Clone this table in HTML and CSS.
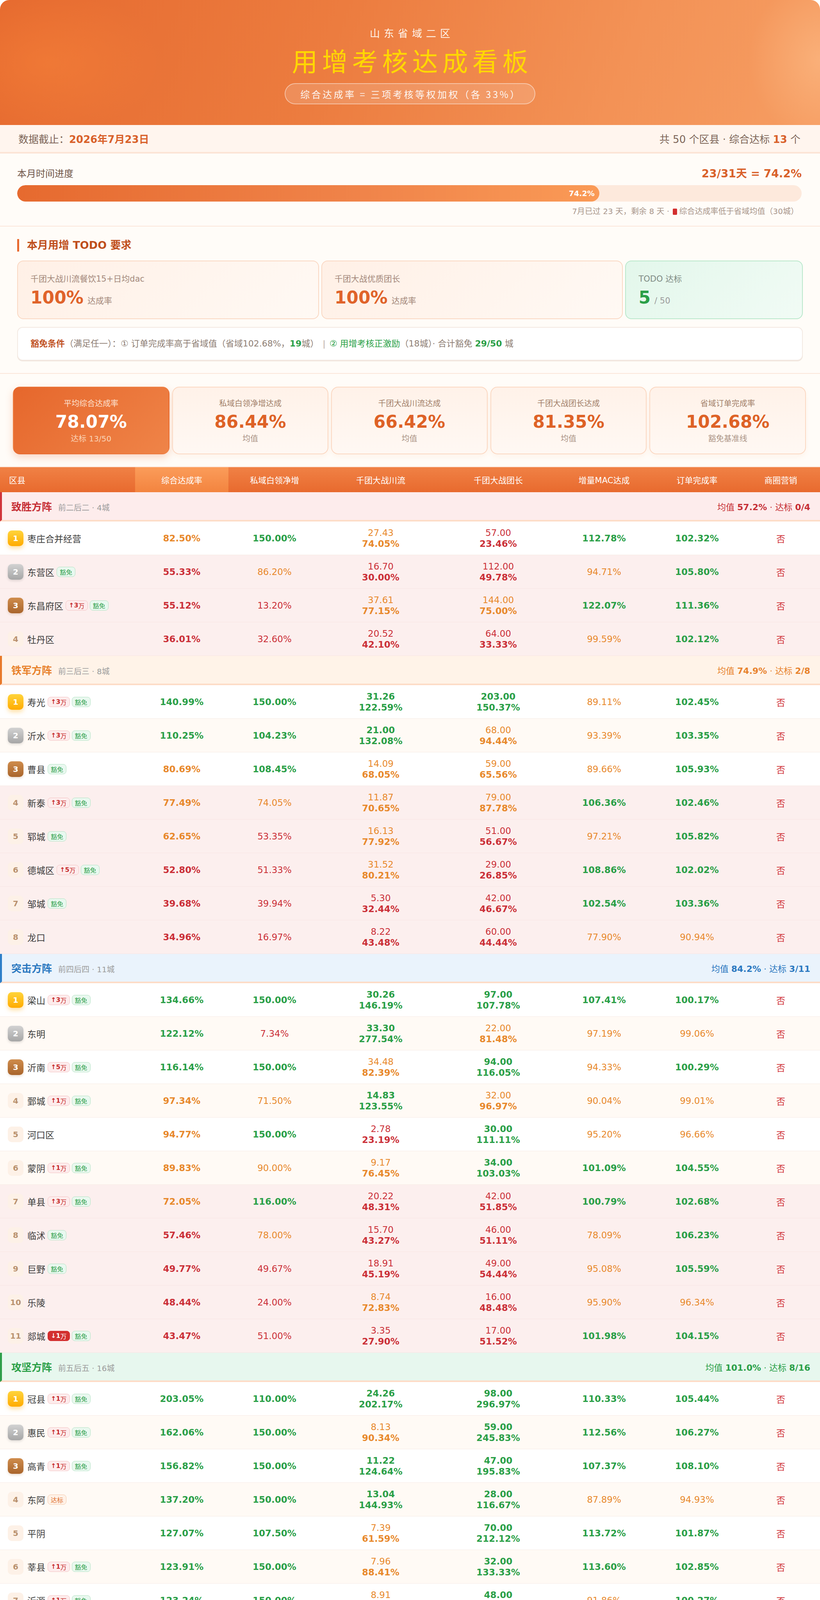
FILE: index.html
```html
<!DOCTYPE html>
<html lang="zh-CN">
<head>
<meta charset="utf-8">
<title>用增考核达成看板</title>
<link rel="stylesheet" href="styles.css">
</head>
<body>
<div class="page">
  <header class="hero">
    <div class="hero-sub">山东省域二区</div>
    <h1 class="hero-title">用增考核达成看板</h1>
    <div class="hero-pill">综合达成率 = 三项考核等权加权（各 33%）</div>
  </header>

  <div class="info">
    <div>数据截止：<b>2026年7月23日</b></div>
    <div>共 50 个区县 · 综合达标 <b>13</b> 个</div>
  </div>

  <section class="progress">
    <div class="progress-head">
      <span class="progress-label">本月时间进度</span>
      <span class="progress-value">23/31天 = 74.2%</span>
    </div>
    <div class="bar"><div class="bar-fill" style="width:74.2%"><span>74.2%</span></div></div>
    <div class="progress-note">7月已过 23 天，剩余 8 天 · <i class="swatch"></i>综合达成率低于省域均值（30城）</div>
  </section>

  <section class="todo">
    <h2 class="sec-title">本月用增 TODO 要求</h2>
    <div class="todo-grid">
      <div class="todo-card">
        <div class="todo-label">千团大战川流餐饮15+日均dac</div>
        <div class="todo-val"><b>100%</b><span>达成率</span></div>
      </div>
      <div class="todo-card">
        <div class="todo-label">千团大战优质团长</div>
        <div class="todo-val"><b>100%</b><span>达成率</span></div>
      </div>
      <div class="todo-card green">
        <div class="todo-label">TODO 达标</div>
        <div class="todo-val"><b>5</b><span>/ 50</span></div>
      </div>
    </div>
    <div class="exempt">
      <p class="ex-text"><b class="ex-title">豁免条件</b>（满足任一）：① 订单完成率高于省域值（省域102.68%，<b class="ex-num">19</b>城）<span class="ex-sep">|</span><span class="ex-green">② 用增考核正激励</span>（18城）· 合计豁免 <b class="ex-num">29/50</b> 城</p>
    </div>
  </section>

  <section class="kpis">
    <div class="kpi main">
      <div class="kpi-label">平均综合达成率</div>
      <div class="kpi-val">78.07%</div>
      <div class="kpi-sub">达标 13/50</div>
    </div>
    <div class="kpi">
      <div class="kpi-label">私域白领净增达成</div>
      <div class="kpi-val">86.44%</div>
      <div class="kpi-sub">均值</div>
    </div>
    <div class="kpi">
      <div class="kpi-label">千团大战川流达成</div>
      <div class="kpi-val">66.42%</div>
      <div class="kpi-sub">均值</div>
    </div>
    <div class="kpi">
      <div class="kpi-label">千团大战团长达成</div>
      <div class="kpi-val">81.35%</div>
      <div class="kpi-sub">均值</div>
    </div>
    <div class="kpi">
      <div class="kpi-label">省域订单完成率</div>
      <div class="kpi-val">102.68%</div>
      <div class="kpi-sub">豁免基准线</div>
    </div>
  </section>

  <div class="table">
    <div class="thead">
      <div class="th-name">区县</div>
      <div class="th-hl">综合达成率</div>
      <div>私域白领净增</div>
      <div>千团大战川流</div>
      <div>千团大战团长</div>
      <div>增量MAC达成</div>
      <div>订单完成率</div>
      <div>商圈营销</div>
    </div>

    <!-- 致胜方阵 -->
    <div class="grp g-red"><div><span class="gt">致胜方阵</span><span class="gs">前二后二 · 4城</span></div><div class="ga">均值 <b>57.2%</b> · 达标 <b>0/4</b></div></div>
    <div class="row"><div class="nm"><span class="rk k1">1</span><span class="n">枣庄合并经营</span></div><div class="o m">82.50%</div><div class="g">150.00%</div><div class="t o"><span>27.43</span><b>74.05%</b></div><div class="t r"><span>57.00</span><b>23.46%</b></div><div class="g">112.78%</div><div class="g">102.32%</div><div class="no">否</div></div>
    <div class="row pk"><div class="nm"><span class="rk k2">2</span><span class="n">东营区</span><span class="bd mf">豁免</span></div><div class="r m">55.33%</div><div class="o">86.20%</div><div class="t r"><span>16.70</span><b>30.00%</b></div><div class="t r"><span>112.00</span><b>49.78%</b></div><div class="o">94.71%</div><div class="g">105.80%</div><div class="no">否</div></div>
    <div class="row pk"><div class="nm"><span class="rk k3">3</span><span class="n">东昌府区</span><span class="bd up"><b>↑3</b>万</span><span class="bd mf">豁免</span></div><div class="r m">55.12%</div><div class="r">13.20%</div><div class="t o"><span>37.61</span><b>77.15%</b></div><div class="t o"><span>144.00</span><b>75.00%</b></div><div class="g">122.07%</div><div class="g">111.36%</div><div class="no">否</div></div>
    <div class="row pk"><div class="nm"><span class="rk">4</span><span class="n">牡丹区</span></div><div class="r m">36.01%</div><div class="r">32.60%</div><div class="t r"><span>20.52</span><b>42.10%</b></div><div class="t r"><span>64.00</span><b>33.33%</b></div><div class="o">99.59%</div><div class="g">102.12%</div><div class="no">否</div></div>

    <!-- 铁军方阵 -->
    <div class="grp g-orange"><div><span class="gt">铁军方阵</span><span class="gs">前三后三 · 8城</span></div><div class="ga">均值 <b>74.9%</b> · 达标 <b>2/8</b></div></div>
    <div class="row"><div class="nm"><span class="rk k1">1</span><span class="n">寿光</span><span class="bd up"><b>↑3</b>万</span><span class="bd mf">豁免</span></div><div class="g m">140.99%</div><div class="g">150.00%</div><div class="t g"><span>31.26</span><b>122.59%</b></div><div class="t g"><span>203.00</span><b>150.37%</b></div><div class="o">89.11%</div><div class="g">102.45%</div><div class="no">否</div></div>
    <div class="row st"><div class="nm"><span class="rk k2">2</span><span class="n">沂水</span><span class="bd up"><b>↑3</b>万</span><span class="bd mf">豁免</span></div><div class="g m">110.25%</div><div class="g">104.23%</div><div class="t g"><span>21.00</span><b>132.08%</b></div><div class="t o"><span>68.00</span><b>94.44%</b></div><div class="o">93.39%</div><div class="g">103.35%</div><div class="no">否</div></div>
    <div class="row"><div class="nm"><span class="rk k3">3</span><span class="n">曹县</span><span class="bd mf">豁免</span></div><div class="o m">80.69%</div><div class="g">108.45%</div><div class="t o"><span>14.09</span><b>68.05%</b></div><div class="t o"><span>59.00</span><b>65.56%</b></div><div class="o">89.66%</div><div class="g">105.93%</div><div class="no">否</div></div>
    <div class="row pk"><div class="nm"><span class="rk">4</span><span class="n">新泰</span><span class="bd up"><b>↑3</b>万</span><span class="bd mf">豁免</span></div><div class="o m">77.49%</div><div class="o">74.05%</div><div class="t o"><span>11.87</span><b>70.65%</b></div><div class="t o"><span>79.00</span><b>87.78%</b></div><div class="g">106.36%</div><div class="g">102.46%</div><div class="no">否</div></div>
    <div class="row pk"><div class="nm"><span class="rk">5</span><span class="n">郓城</span><span class="bd mf">豁免</span></div><div class="o m">62.65%</div><div class="r">53.35%</div><div class="t o"><span>16.13</span><b>77.92%</b></div><div class="t r"><span>51.00</span><b>56.67%</b></div><div class="o">97.21%</div><div class="g">105.82%</div><div class="no">否</div></div>
    <div class="row pk"><div class="nm"><span class="rk">6</span><span class="n">德城区</span><span class="bd up"><b>↑5</b>万</span><span class="bd mf">豁免</span></div><div class="r m">52.80%</div><div class="r">51.33%</div><div class="t o"><span>31.52</span><b>80.21%</b></div><div class="t r"><span>29.00</span><b>26.85%</b></div><div class="g">108.86%</div><div class="g">102.02%</div><div class="no">否</div></div>
    <div class="row pk"><div class="nm"><span class="rk">7</span><span class="n">邹城</span><span class="bd mf">豁免</span></div><div class="r m">39.68%</div><div class="r">39.94%</div><div class="t r"><span>5.30</span><b>32.44%</b></div><div class="t r"><span>42.00</span><b>46.67%</b></div><div class="g">102.54%</div><div class="g">103.36%</div><div class="no">否</div></div>
    <div class="row pk"><div class="nm"><span class="rk">8</span><span class="n">龙口</span></div><div class="r m">34.96%</div><div class="r">16.97%</div><div class="t r"><span>8.22</span><b>43.48%</b></div><div class="t r"><span>60.00</span><b>44.44%</b></div><div class="o">77.90%</div><div class="o">90.94%</div><div class="no">否</div></div>

    <!-- 突击方阵 -->
    <div class="grp g-blue"><div><span class="gt">突击方阵</span><span class="gs">前四后四 · 11城</span></div><div class="ga">均值 <b>84.2%</b> · 达标 <b>3/11</b></div></div>
    <div class="row"><div class="nm"><span class="rk k1">1</span><span class="n">梁山</span><span class="bd up"><b>↑3</b>万</span><span class="bd mf">豁免</span></div><div class="g m">134.66%</div><div class="g">150.00%</div><div class="t g"><span>30.26</span><b>146.19%</b></div><div class="t g"><span>97.00</span><b>107.78%</b></div><div class="g">107.41%</div><div class="g">100.17%</div><div class="no">否</div></div>
    <div class="row st"><div class="nm"><span class="rk k2">2</span><span class="n">东明</span></div><div class="g m">122.12%</div><div class="r">7.34%</div><div class="t g"><span>33.30</span><b>277.54%</b></div><div class="t o"><span>22.00</span><b>81.48%</b></div><div class="o">97.19%</div><div class="o">99.06%</div><div class="no">否</div></div>
    <div class="row"><div class="nm"><span class="rk k3">3</span><span class="n">沂南</span><span class="bd up"><b>↑5</b>万</span><span class="bd mf">豁免</span></div><div class="g m">116.14%</div><div class="g">150.00%</div><div class="t o"><span>34.48</span><b>82.39%</b></div><div class="t g"><span>94.00</span><b>116.05%</b></div><div class="o">94.33%</div><div class="g">100.29%</div><div class="no">否</div></div>
    <div class="row st"><div class="nm"><span class="rk">4</span><span class="n">鄄城</span><span class="bd up"><b>↑1</b>万</span><span class="bd mf">豁免</span></div><div class="o m">97.34%</div><div class="o">71.50%</div><div class="t g"><span>14.83</span><b>123.55%</b></div><div class="t o"><span>32.00</span><b>96.97%</b></div><div class="o">90.04%</div><div class="o">99.01%</div><div class="no">否</div></div>
    <div class="row"><div class="nm"><span class="rk">5</span><span class="n">河口区</span></div><div class="o m">94.77%</div><div class="g">150.00%</div><div class="t r"><span>2.78</span><b>23.19%</b></div><div class="t g"><span>30.00</span><b>111.11%</b></div><div class="o">95.20%</div><div class="o">96.66%</div><div class="no">否</div></div>
    <div class="row st"><div class="nm"><span class="rk">6</span><span class="n">蒙阴</span><span class="bd up"><b>↑1</b>万</span><span class="bd mf">豁免</span></div><div class="o m">89.83%</div><div class="o">90.00%</div><div class="t o"><span>9.17</span><b>76.45%</b></div><div class="t g"><span>34.00</span><b>103.03%</b></div><div class="g">101.09%</div><div class="g">104.55%</div><div class="no">否</div></div>
    <div class="row pk"><div class="nm"><span class="rk">7</span><span class="n">单县</span><span class="bd up"><b>↑3</b>万</span><span class="bd mf">豁免</span></div><div class="o m">72.05%</div><div class="g">116.00%</div><div class="t r"><span>20.22</span><b>48.31%</b></div><div class="t r"><span>42.00</span><b>51.85%</b></div><div class="g">100.79%</div><div class="g">102.68%</div><div class="no">否</div></div>
    <div class="row pk"><div class="nm"><span class="rk">8</span><span class="n">临沭</span><span class="bd mf">豁免</span></div><div class="r m">57.46%</div><div class="o">78.00%</div><div class="t r"><span>15.70</span><b>43.27%</b></div><div class="t r"><span>46.00</span><b>51.11%</b></div><div class="o">78.09%</div><div class="g">106.23%</div><div class="no">否</div></div>
    <div class="row pk"><div class="nm"><span class="rk">9</span><span class="n">巨野</span><span class="bd mf">豁免</span></div><div class="r m">49.77%</div><div class="r">49.67%</div><div class="t r"><span>18.91</span><b>45.19%</b></div><div class="t r"><span>49.00</span><b>54.44%</b></div><div class="o">95.08%</div><div class="g">105.59%</div><div class="no">否</div></div>
    <div class="row pk"><div class="nm"><span class="rk">10</span><span class="n">乐陵</span></div><div class="r m">48.44%</div><div class="r">24.00%</div><div class="t o"><span>8.74</span><b>72.83%</b></div><div class="t r"><span>16.00</span><b>48.48%</b></div><div class="o">95.90%</div><div class="o">96.34%</div><div class="no">否</div></div>
    <div class="row pk"><div class="nm"><span class="rk">11</span><span class="n">郯城</span><span class="bd dn"><b>↓1</b>万</span><span class="bd mf">豁免</span></div><div class="r m">43.47%</div><div class="r">51.00%</div><div class="t r"><span>3.35</span><b>27.90%</b></div><div class="t r"><span>17.00</span><b>51.52%</b></div><div class="g">101.98%</div><div class="g">104.15%</div><div class="no">否</div></div>

    <!-- 攻坚方阵 -->
    <div class="grp g-green"><div><span class="gt">攻坚方阵</span><span class="gs">前五后五 · 16城</span></div><div class="ga">均值 <b>101.0%</b> · 达标 <b>8/16</b></div></div>
    <div class="row"><div class="nm"><span class="rk k1">1</span><span class="n">冠县</span><span class="bd up"><b>↑1</b>万</span><span class="bd mf">豁免</span></div><div class="g m">203.05%</div><div class="g">110.00%</div><div class="t g"><span>24.26</span><b>202.17%</b></div><div class="t g"><span>98.00</span><b>296.97%</b></div><div class="g">110.33%</div><div class="g">105.44%</div><div class="no">否</div></div>
    <div class="row st"><div class="nm"><span class="rk k2">2</span><span class="n">惠民</span><span class="bd up"><b>↑1</b>万</span><span class="bd mf">豁免</span></div><div class="g m">162.06%</div><div class="g">150.00%</div><div class="t o"><span>8.13</span><b>90.34%</b></div><div class="t g"><span>59.00</span><b>245.83%</b></div><div class="g">112.56%</div><div class="g">106.27%</div><div class="no">否</div></div>
    <div class="row"><div class="nm"><span class="rk k3">3</span><span class="n">高青</span><span class="bd up"><b>↑1</b>万</span><span class="bd mf">豁免</span></div><div class="g m">156.82%</div><div class="g">150.00%</div><div class="t g"><span>11.22</span><b>124.64%</b></div><div class="t g"><span>47.00</span><b>195.83%</b></div><div class="g">107.37%</div><div class="g">108.10%</div><div class="no">否</div></div>
    <div class="row st"><div class="nm"><span class="rk">4</span><span class="n">东阿</span><span class="bd ok">达标</span></div><div class="g m">137.20%</div><div class="g">150.00%</div><div class="t g"><span>13.04</span><b>144.93%</b></div><div class="t g"><span>28.00</span><b>116.67%</b></div><div class="o">87.89%</div><div class="o">94.93%</div><div class="no">否</div></div>
    <div class="row"><div class="nm"><span class="rk">5</span><span class="n">平阴</span></div><div class="g m">127.07%</div><div class="g">107.50%</div><div class="t o"><span>7.39</span><b>61.59%</b></div><div class="t g"><span>70.00</span><b>212.12%</b></div><div class="g">113.72%</div><div class="g">101.87%</div><div class="no">否</div></div>
    <div class="row st"><div class="nm"><span class="rk">6</span><span class="n">莘县</span><span class="bd up"><b>↑1</b>万</span><span class="bd mf">豁免</span></div><div class="g m">123.91%</div><div class="g">150.00%</div><div class="t o"><span>7.96</span><b>88.41%</b></div><div class="t g"><span>32.00</span><b>133.33%</b></div><div class="g">113.60%</div><div class="g">102.85%</div><div class="no">否</div></div>
    <div class="row"><div class="nm"><span class="rk">7</span><span class="n">沂源</span><span class="bd up"><b>↑1</b>万</span><span class="bd mf">豁免</span></div><div class="g m">123.24%</div><div class="g">150.00%</div><div class="t o"><span>8.91</span><b>74.28%</b></div><div class="t g"><span>48.00</span><b>145.45%</b></div><div class="o">91.86%</div><div class="g">100.27%</div><div class="no">否</div></div>
    <div class="row st"><div class="nm"><span class="rk">8</span><span class="n">无棣</span><span class="bd up"><b>↑1</b>万</span><span class="bd mf">豁免</span></div><div class="g m">119.20%</div><div class="g">142.15%</div><div class="t r"><span>4.39</span><b>48.79%</b></div><div class="t g"><span>40.00</span><b>166.67%</b></div><div class="o">85.40%</div><div class="g">104.85%</div><div class="no">否</div></div>
    <div class="row"><div class="nm"><span class="rk">9</span><span class="n">齐河</span><span class="bd up"><b>↑1</b>万</span><span class="bd mf">豁免</span></div><div class="o m">92.81%</div><div class="g">130.50%</div><div class="t g"><span>24.78</span><b>137.68%</b></div><div class="t r"><span>4.00</span><b>10.26%</b></div><div class="g">105.46%</div><div class="o">97.81%</div><div class="no">否</div></div>
    <div class="row st"><div class="nm"><span class="rk">10</span><span class="n">阳谷</span></div><div class="o m">86.89%</div><div class="o">78.50%</div><div class="t o"><span>8.04</span><b>67.03%</b></div><div class="t g"><span>38.00</span><b>115.15%</b></div><div class="o">95.79%</div><div class="o">94.90%</div><div class="no">否</div></div>
    <div class="row pk"><div class="nm"><span class="rk">11</span><span class="n">东平</span></div><div class="o m">68.00%</div><div class="o">98.58%</div><div class="t r"><span>7.43</span><b>41.30%</b></div><div class="t o"><span>25.00</span><b>64.10%</b></div><div class="o">90.51%</div><div class="o">96.33%</div><div class="no">否</div></div>
    <div class="row pk"><div class="nm"><span class="rk">12</span><span class="n">定陶区</span></div><div class="r m">51.32%</div><div class="r">34.50%</div><div class="t o"><span>9.61</span><b>80.07%</b></div><div class="t r"><span>13.00</span><b>39.39%</b></div><div class="g">101.76%</div><div class="o">98.81%</div><div class="no">否</div></div>
    <div class="row pk"><div class="nm"><span class="rk">13</span><span class="n">商河</span></div><div class="r m">49.66%</div><div class="r">58.50%</div><div class="t r"><span>2.13</span><b>17.75%</b></div><div class="t o"><span>24.00</span><b>72.73%</b></div><div class="o">96.22%</div><div class="g">100.03%</div><div class="no">否</div></div>
    <div class="row pk"><div class="nm"><span class="rk">14</span><span class="n">微山</span><span class="bd mf">豁免</span></div><div class="r m">45.67%</div><div class="r">20.50%</div><div class="t o"><span>7.43</span><b>61.96%</b></div><div class="t r"><span>18.00</span><b>54.55%</b></div><div class="g">101.13%</div><div class="g">107.03%</div><div class="no">否</div></div>
    <div class="row pk"><div class="nm"><span class="rk">15</span><span class="n">庆云</span><span class="bd dn"><b>↓1</b>万</span></div><div class="r m">39.50%</div><div class="o">71.50%</div><div class="t r"><span>0.91</span><b>7.61%</b></div><div class="t r"><span>13.00</span><b>39.39%</b></div><div class="g">111.85%</div><div class="o">96.53%</div><div class="no">否</div></div>
    <div class="row pk"><div class="nm"><span class="rk">16</span><span class="n">茌平区</span></div><div class="r m">30.23%</div><div class="r">19.50%</div><div class="t r"><span>3.09</span><b>25.72%</b></div><div class="t r"><span>15.00</span><b>45.45%</b></div><div class="g">112.48%</div><div class="g">102.22%</div><div class="no">否</div></div>

    <!-- 突围方阵 -->
    <div class="grp g-purple"><div><span class="gt">突围方阵</span><span class="gs">前四后四 · 11城</span></div><div class="ga">均值 <b>48.4%</b> · 达标 <b>0/11</b></div></div>
    <div class="row pk"><div class="nm"><span class="rk k1">1</span><span class="n">沾化区</span></div><div class="o m">72.02%</div><div class="g">150.00%</div><div class="t r"><span>0.70</span><b>7.73%</b></div><div class="t r"><span>14.00</span><b>58.33%</b></div><div class="o">80.38%</div><div class="o">94.44%</div><div class="no">否</div></div>
    <div class="row pk"><div class="nm"><span class="rk k2">2</span><span class="n">垦利</span></div><div class="o m">70.56%</div><div class="g">150.00%</div><div class="t r"><span>1.87</span><b>10.39%</b></div><div class="t r"><span>20.00</span><b>51.28%</b></div><div class="o">89.21%</div><div class="g">102.02%</div><div class="no">否</div></div>
    <div class="row pk"><div class="nm"><span class="rk k3">3</span><span class="n">平原</span></div><div class="o m">69.12%</div><div class="g">111.46%</div><div class="t r"><span>4.13</span><b>45.89%</b></div><div class="t r"><span>12.00</span><b>50.00%</b></div><div class="o">83.30%</div><div class="o">94.90%</div><div class="no">否</div></div>
    <div class="row pk"><div class="nm"><span class="rk">4</span><span class="n">临邑</span><span class="bd mf">豁免</span></div><div class="r m">54.66%</div><div class="r">55.21%</div><div class="t r"><span>4.91</span><b>54.59%</b></div><div class="t r"><span>13.00</span><b>54.17%</b></div><div class="o">90.79%</div><div class="g">107.63%</div><div class="no">否</div></div>
    <div class="row pk"><div class="nm"><span class="rk">5</span><span class="n">成武</span><span class="bd up"><b>↑1</b>万</span><span class="bd mf">豁免</span></div><div class="r m">54.23%</div><div class="g">150.00%</div><div class="t r"><span>0.39</span><b>4.35%</b></div><div class="t r"><span>2.00</span><b>8.33%</b></div><div class="o">87.72%</div><div class="g">100.78%</div><div class="no">否</div></div>
    <div class="row pk"><div class="nm"><span class="rk">6</span><span class="n">利津</span></div><div class="r m">46.38%</div><div class="r">13.22%</div><div class="t r"><span>1.96</span><b>21.74%</b></div><div class="t g"><span>25.00</span><b>104.17%</b></div><div class="o">73.12%</div><div class="o">91.31%</div><div class="no">否</div></div>
    <div class="row pk"><div class="nm"><span class="rk">7</span><span class="n">夏津</span></div><div class="r m">39.98%</div><div class="r">54.17%</div><div class="t r"><span>1.04</span><b>11.59%</b></div><div class="t r"><span>13.00</span><b>54.17%</b></div><div class="o">93.87%</div><div class="o">97.98%</div><div class="no">否</div></div>
    <div class="row pk"><div class="nm"><span class="rk">8</span><span class="n">武城</span><span class="bd mf">豁免</span></div><div class="r m">37.86%</div><div class="o">98.96%</div><div class="t r"><span>0.57</span><b>6.28%</b></div><div class="t r"><span>2.00</span><b>8.33%</b></div><div class="o">81.93%</div><div class="g">104.76%</div><div class="no">否</div></div>
    <div class="row pk"><div class="nm"><span class="rk">9</span><span class="n">宁津</span></div><div class="r m">33.84%</div><div class="r">31.91%</div><div class="t r"><span>1.91</span><b>10.63%</b></div><div class="t r"><span>23.00</span><b>58.97%</b></div><div class="o">99.69%</div><div class="g">101.83%</div><div class="no">否</div></div>
    <div class="row pk"><div class="nm"><span class="rk">10</span><span class="n">陵城区</span></div><div class="r m">28.53%</div><div class="r">33.06%</div><div class="t r"><span>2.48</span><b>27.54%</b></div><div class="t r"><span>6.00</span><b>25.00%</b></div><div class="o">87.61%</div><div class="o">90.94%</div><div class="no">否</div></div>
    <div class="row pk"><div class="nm"><span class="rk">11</span><span class="n">禹城</span><span class="bd mf">豁免</span></div><div class="r m">25.13%</div><div class="r">34.38%</div><div class="t r"><span>2.57</span><b>28.50%</b></div><div class="t r"><span>3.00</span><b>12.50%</b></div><div class="o">92.36%</div><div class="g">105.56%</div><div class="no">否</div></div>
  </div>

  <footer class="foot">2026-07-26 16:05 · 数据截止2026年7月23日 · 5大方阵分组 · 数据来源：FBI报表1749166 &amp; 1378750</footer>
</div>
</body>
</html>
```

FILE: styles.css
```css
* { box-sizing: border-box; }

body {
  margin: 0;
  background: #ffffff;
  font-family: "DejaVu Sans", "Noto Sans CJK SC", sans-serif;
  color: #3c3c3c;
}

.page {
  width: 2100px;
  border-radius: 24px 24px 0 0;
  overflow: hidden;
  background: #fffcf8;
}

/* ---------- hero ---------- */
.hero {
  height: 320px;
  padding-top: 64px;
  display: flex;
  flex-direction: column;
  align-items: center;
  background:
    radial-gradient(ellipse 420px 260px at 6% 50%, rgba(255, 140, 60, 0.35), rgba(255, 140, 60, 0) 70%),
    radial-gradient(ellipse 260px 300px at 100% 48%, rgba(255, 200, 150, 0.45), rgba(255, 200, 150, 0) 70%),
    linear-gradient(110deg, #e66a2f 0%, #ec7c3f 40%, #f39256 75%, #f69d62 100%);
}

.hero-sub {
  font-family: "Noto Sans CJK SC", sans-serif;
  font-size: 26px;
  line-height: 40px;
  letter-spacing: 10px;
  padding-left: 10px;
  color: #fff3e8;
}

.hero-title {
  margin: 7px 0 0;
  font-family: "Noto Sans CJK SC", sans-serif;
  font-size: 66px;
  line-height: 84px;
  font-weight: 400;
  letter-spacing: 11px;
  padding-left: 11px;
  color: #ffd700;
}

.hero-pill {
  margin-top: 18px;
  height: 54px;
  padding: 0 34px 0 38px;
  display: flex;
  align-items: center;
  border: 2.5px solid rgba(255, 255, 255, 0.45);
  border-radius: 27px;
  background: rgba(255, 255, 255, 0.15);
  font-family: "Noto Sans CJK SC", sans-serif;
  font-size: 24px;
  letter-spacing: 4.5px;
  color: rgba(255, 255, 255, 0.93);
}

/* ---------- info bar ---------- */
.info {
  height: 73px;
  padding: 0 50px 0 47px;
  display: flex;
  justify-content: space-between;
  align-items: center;
  background: #fff5ee;
  border-bottom: 4px solid #fce4d6;
  font-size: 26px;
  color: #7d6558;
}
.info b { color: #d9612a; }

/* ---------- progress ---------- */
.progress {
  height: 187px;
  padding: 30px 47px 0 44px;
  border-bottom: 2px solid #fbe6da;
}
.progress-head {
  height: 38px;
  display: flex;
  justify-content: space-between;
  align-items: center;
}
.progress-label { font-size: 24px; color: #6e5447; }
.progress-value { font-size: 28px; font-weight: 700; color: #d9612a; }

.bar {
  margin-top: 13px;
  height: 42px;
  border-radius: 21px;
  background: #fde9dc;
  overflow: hidden;
}
.bar-fill {
  height: 100%;
  border-radius: 21px;
  background: linear-gradient(90deg, #e66a2f 0%, #f0844a 60%, #fa9a56 100%);
  display: flex;
  justify-content: flex-end;
  align-items: center;
  padding-right: 12px;
}
.bar-fill span { color: #fff; font-size: 19px; font-weight: 700; }

.progress-note {
  margin-top: 12px;
  padding-right: 8px;
  line-height: 26px;
  text-align: right;
  font-size: 20px;
  color: #a8958a;
}
.swatch {
  display: inline-block;
  width: 11px;
  height: 16px;
  margin: 0 6px -2px 2px;
  background: #d32f2f;
  border-radius: 2px;
}

/* ---------- todo ---------- */
.todo {
  height: 377px;
  padding: 32px 44px 0;
  border-bottom: 2px solid #fbe6da;
}
.sec-title {
  margin: 0;
  height: 32px;
  line-height: 32px;
  padding-left: 20px;
  border-left: 5px solid #e8692e;
  font-size: 27px;
  font-weight: 700;
  color: #bf4e1c;
}
.todo-grid {
  margin-top: 23px;
  display: grid;
  grid-template-columns: 1.7fr 1.7fr 1fr;
  gap: 6px;
}
.todo-card {
  height: 150px;
  padding: 30px 32px 0;
  border: 2px solid #fad8c3;
  border-radius: 16px;
  background: linear-gradient(135deg, #fff0e6 0%, #fff9f4 100%);
}
.todo-card.green {
  border-color: #b9e8cb;
  background: linear-gradient(135deg, #e3f7eb 0%, #f1fbf5 100%);
}
.todo-label {
  height: 30px;
  line-height: 30px;
  font-size: 21px;
  color: #a3877a;
}
.todo-card.green .todo-label { color: #7f8b84; }
.todo-val {
  margin-top: 7px;
  height: 52px;
  display: flex;
  align-items: baseline;
  gap: 10px;
}
.todo-val b { font-size: 44px; line-height: 52px; color: #e0632a; }
.todo-val span { font-size: 21px; color: #a3877a; }
.todo-card.green .todo-val b { color: #2a9f47; }
.todo-card.green .todo-val span { color: #9a9a9a; }

.exempt {
  margin-top: 20px;
  height: 86px;
  padding: 0 32px;
  display: flex;
  align-items: center;
  border: 2px solid #f3e9e2;
  border-radius: 14px;
  background: #ffffff;
  box-shadow: 0 2px 0 #f1e6de;
}
.ex-text {
  margin: 0;
  font-size: 22px;
  line-height: 30px;
  color: #8d7d73;
  white-space: nowrap;
}
.ex-title { color: #c0501f; font-weight: 700; }
.ex-num { color: #2a9f47; font-weight: 700; }
.ex-green { color: #2a9f47; }
.ex-sep { color: #b9aaa0; margin: 0 10px; }

/* ---------- kpis ---------- */
.kpis {
  height: 239px;
  padding: 33px 36px 0 33px;
  display: grid;
  grid-template-columns: repeat(5, 1fr);
  align-items: start;
  gap: 7px;
  border-bottom: 2px solid #fbe6da;
}
.kpi {
  height: 173px;
  padding-top: 27px;
  text-align: center;
  border: 2px solid #fbd8c2;
  border-radius: 18px;
  background: linear-gradient(180deg, #fff2e9 0%, #fff8f3 100%);
  box-shadow: 0 6px 14px rgba(240, 140, 80, 0.08);
}
.kpi.main {
  border-color: transparent;
  background: linear-gradient(135deg, #e6672c 0%, #ef8448 100%);
  box-shadow: 0 8px 20px rgba(232, 105, 46, 0.25);
}
.kpi-label { height: 28px; line-height: 28px; font-size: 20px; color: #a27f69; }
.kpi-val {
  margin-top: 5px;
  height: 56px;
  line-height: 56px;
  font-size: 44px;
  font-weight: 700;
  color: #de6226;
}
.kpi-sub { margin-top: 2px; line-height: 26px; font-size: 20px; color: #ab9385; }
.kpi.main .kpi-label { color: rgba(255, 240, 225, 0.9); }
.kpi.main .kpi-val { color: #ffffff; }
.kpi.main .kpi-sub { color: rgba(255, 235, 215, 0.8); }

/* ---------- table ---------- */
.thead,
.row {
  display: grid;
  grid-template-columns: 346px 239px 236px 308px 294px 248px 228px 201px;
}
.thead {
  height: 64px;
  background: linear-gradient(180deg, #f08145 0%, #e86a2e 100%);
  color: #ffffff;
  font-size: 21px;
}
.thead > div {
  display: flex;
  align-items: center;
  justify-content: center;
}
.thead > .th-name { justify-content: flex-start; padding-left: 23px; }
.thead > .th-hl { background: linear-gradient(180deg, #fb9c5a 0%, #f3843f 100%); }

.grp {
  height: 75px;
  padding: 0 25px 0 24px;
  display: flex;
  justify-content: space-between;
  align-items: center;
  border-left: 5px solid;
  border-bottom: 4px solid #fddcc7;
}
.gt { font-size: 26px; font-weight: 700; }
.gs { margin-left: 16px; font-size: 20px; color: #9b9b9b; }
.ga { font-size: 22px; }
.ga b { font-weight: 700; }

.g-red { background: #fdecec; border-left-color: #d0343a; }
.g-red .gt, .g-red .ga { color: #c62f35; }
.g-orange { background: #fff3e8; border-left-color: #e8792a; }
.g-orange .gt, .g-orange .ga { color: #e8822c; }
.g-blue { background: #eaf3fc; border-left-color: #2e7fc8; }
.g-blue .gt, .g-blue .ga { color: #2a78c0; }
.g-green { background: #e7f7ee; border-left-color: #2e9e4a; }
.g-green .gt, .g-green .ga { color: #2a9f47; }
.g-purple { background: #f3eefb; border-left-color: #8e44ad; }
.g-purple .gt, .g-purple .ga { color: #8e44ad; }

.row {
  height: 86px;
  background: #ffffff;
  border-bottom: 1px solid #f6ebe4;
}
.row.st { background: #fffaf5; }
.row.pk { background: #fcefee; border-bottom-color: #f8e5e3; }

.row > div {
  display: flex;
  align-items: center;
  justify-content: center;
  font-size: 23px;
}
.row > .nm {
  justify-content: flex-start;
  padding-left: 20px;
}
.rk {
  flex: none;
  width: 40px;
  height: 40px;
  border-radius: 10px;
  display: flex;
  align-items: center;
  justify-content: center;
  font-size: 20px;
  font-weight: 700;
  color: #b9916e;
  background: #fdf1e7;
}
.rk.k1 {
  color: #ffffff;
  background: linear-gradient(180deg, #ffd43b 0%, #ffab00 100%);
  box-shadow: 0 6px 12px rgba(255, 170, 0, 0.35);
}
.rk.k2 {
  color: #ffffff;
  background: linear-gradient(180deg, #d2d2d2 0%, #a6a6a6 100%);
  box-shadow: 0 3px 6px rgba(0, 0, 0, 0.12);
}
.rk.k3 {
  color: #ffffff;
  background: linear-gradient(180deg, #cf8c4c 0%, #a9652c 100%);
  box-shadow: 0 3px 6px rgba(150, 80, 20, 0.2);
}
.n { margin-left: 10px; font-size: 23px; color: #3c3c3c; }

.bd {
  margin-left: 6px;
  height: 26px;
  padding: 0 7px;
  display: inline-flex;
  align-items: center;
  border: 1.5px solid;
  border-radius: 8px;
  font-size: 16px;
}
.bd + .bd { margin-left: 5px; }
.bd b { font-weight: 700; }
.bd.up { background: #fdecec; border-color: #f4c3c3; color: #c62828; }
.bd.dn { background: #d32f2f; border-color: #d32f2f; color: #ffffff; }
.bd.mf { background: #e9f8ef; border-color: #b3e2c4; color: #2e9e4a; }
.bd.ok { background: #fff2e8; border-color: #f6c8a8; color: #e0702e; }

.row > .t {
  flex-direction: column;
  line-height: 28px;
}
.t span { font-weight: 400; }
.t b { font-weight: 700; }
.t.g span { font-weight: 700; }

.g { color: #2a9f47; font-weight: 700; }
.o { color: #e8892c; }
.r { color: #cb3038; }
.m { font-weight: 700; }
.no { color: #d0343a; }

/* ---------- footer ---------- */
.foot {
  height: 79px;
  display: flex;
  align-items: center;
  justify-content: center;
  font-size: 18px;
  color: #b3a398;
  background: #fffcf8;
}
```
